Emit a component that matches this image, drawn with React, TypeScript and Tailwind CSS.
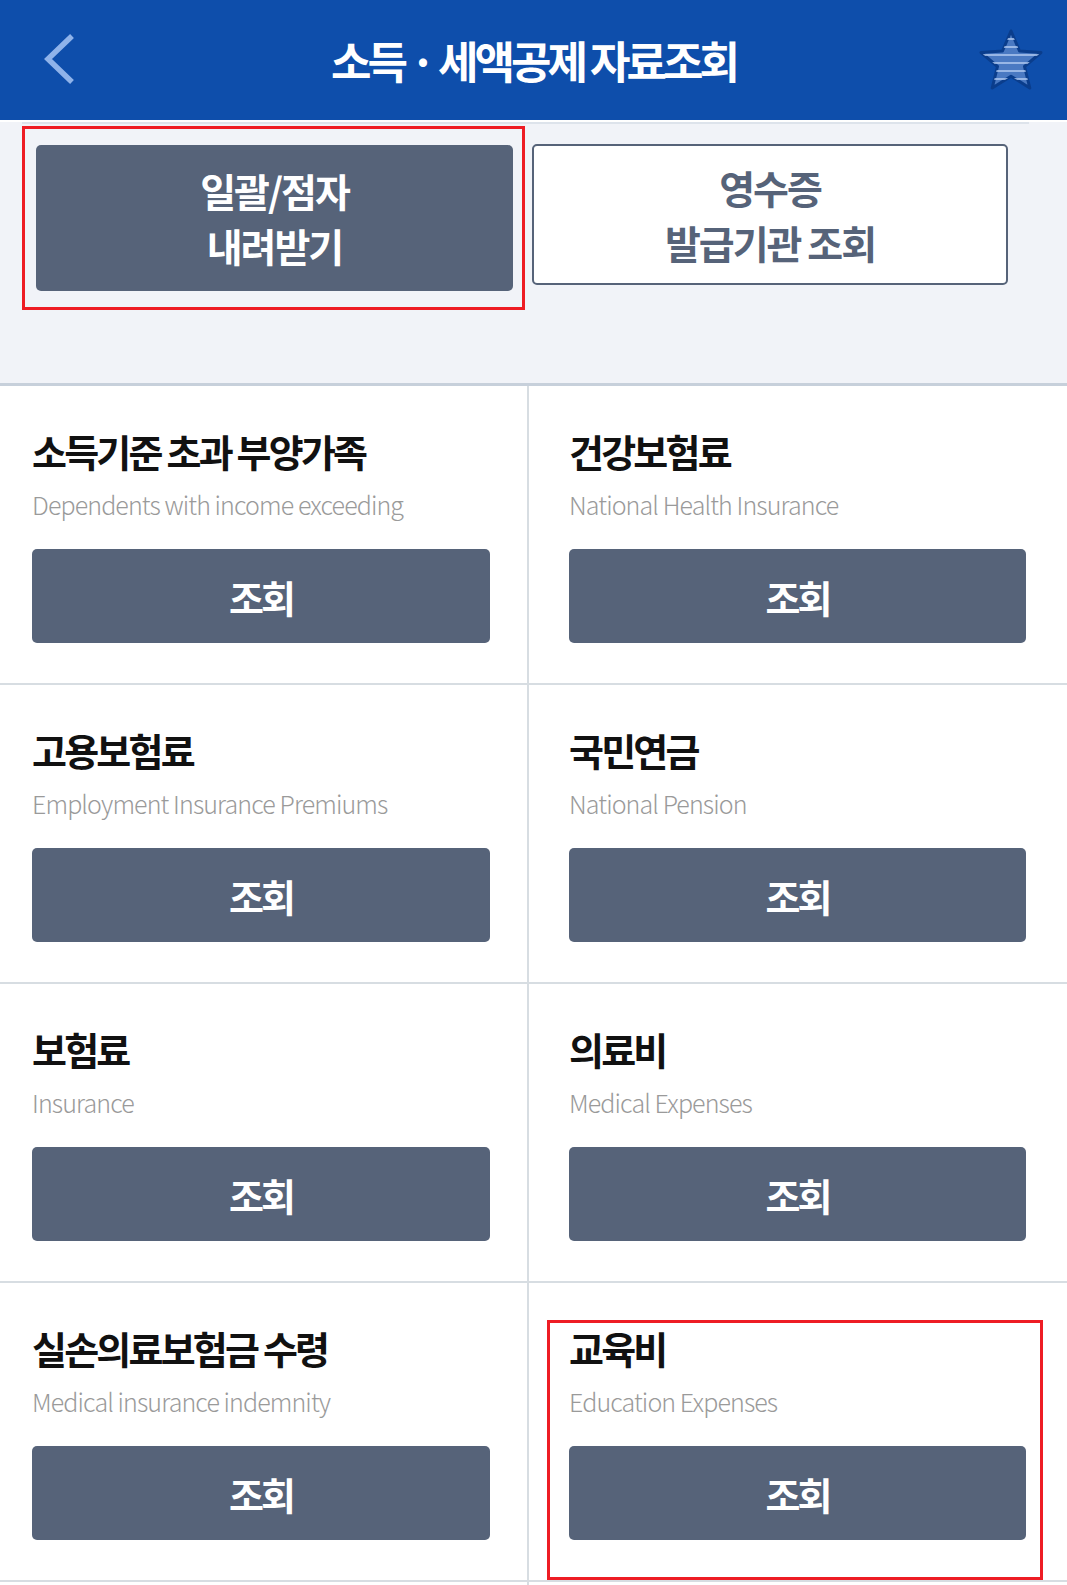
import React from "react";

const items: { ko: string; en: string }[] = [
  { ko: "소득기준 초과 부양가족", en: "Dependents with income exceeding" },
  { ko: "건강보험료", en: "National Health Insurance" },
  { ko: "고용보험료", en: "Employment Insurance Premiums" },
  { ko: "국민연금", en: "National Pension" },
  { ko: "보험료", en: "Insurance" },
  { ko: "의료비", en: "Medical Expenses" },
  { ko: "실손의료보험금 수령", en: "Medical insurance indemnity" },
  { ko: "교육비", en: "Education Expenses" },
];

const STAR =
  "M33 3 L41.5 23 L63 24.5 L46.5 38.5 L51.8 60 L33 48.2 L14.2 60 L19.5 38.5 L3 24.5 L24.5 23 Z";

function Star() {
  return (
    <svg width="66" height="63" viewBox="0 0 66 63">
      <defs>
        <clipPath id="starclip">
          <path d={STAR} />
        </clipPath>
      </defs>
      <path d={STAR} fill="#4a79c2" stroke="#0a3d8c" strokeWidth="3" strokeLinejoin="round" />
      <g clipPath="url(#starclip)" stroke="#b3cbf0" strokeWidth="1.6">
        <line x1="0" y1="11" x2="66" y2="11" />
        <line x1="0" y1="19" x2="66" y2="19" />
        <line x1="0" y1="27" x2="66" y2="27" />
        <line x1="0" y1="35" x2="66" y2="35" />
        <line x1="0" y1="43" x2="66" y2="43" />
        <line x1="0" y1="51" x2="66" y2="51" />
      </g>
    </svg>
  );
}

function Cell({ ko, en, right }: { ko: string; en: string; right?: boolean }) {
  return (
    <div
      className={
        "h-[299px] border-b-2 border-[#d7dde2] pt-[41px] " +
        (right ? "pl-[40px] pr-[41px]" : "pl-[32px] pr-[37px] border-r-2")
      }
    >
      <div className="h-[48px] leading-[48px] text-[38px] font-bold text-[#111111] tracking-[-2.8px] whitespace-nowrap">
        {ko}
      </div>
      <div className="mt-[13px] h-[32px] leading-[32px] text-[25px] font-light text-[#9a9a9a] tracking-[-0.9px] whitespace-nowrap">
        {en}
      </div>
      <button className="mt-[29px] w-full h-[94px] rounded-[5px] bg-[#566379] text-white text-[38px] font-bold tracking-[-3px]">
        조회
      </button>
    </div>
  );
}

export default function App() {
  return (
    <div className="relative w-[1067px] min-h-[1585px] bg-white overflow-hidden font-['Noto_Sans_CJK_KR',sans-serif]">
      <header className="relative h-[120px] bg-[#0e4eab] flex items-center justify-center">
        <svg className="absolute left-[40px] top-[34px]" width="36" height="50" viewBox="0 0 36 50">
          <path d="M30 4 L8 25 L30 46" fill="none" stroke="#8fb3ea" strokeWidth="5.5" strokeLinecap="square" />
        </svg>
        <h1 className="text-white text-[44px] font-bold tracking-[-4px] leading-none">
          소득 · 세액공제 자료조회
        </h1>
        <div className="absolute left-[978px] top-[28px]">
          <Star />
        </div>
      </header>

      <section className="h-[264px] bg-[#f1f3f8] border-b-[3px] border-[#c7d0db]">
        <div className="ml-[22px] mr-[38px] mt-[2px] h-[2px] bg-[#dde3eb]" />
        <div className="flex gap-[19px] pl-[36px] pt-[21px] items-start">
          <button className="w-[477px] h-[146px] rounded-[5px] bg-[#566379] text-white text-[39px] font-bold tracking-[-2px] leading-[55px]">
            일괄/점자
            <br />
            내려받기
          </button>
          <button className="w-[476px] h-[141px] -mt-[1px] rounded-[5px] bg-white border-2 border-[#566379] text-[#566379] text-[39px] font-bold tracking-[-2px] leading-[55px]">
            영수증
            <br />
            발급기관 조회
          </button>
        </div>
      </section>

      <div className="grid grid-cols-[529px_1fr]">
        {items.map((it, i) => (
          <Cell key={i} ko={it.ko} en={it.en} right={i % 2 === 1} />
        ))}
        <div className="h-[40px] border-r-2 border-[#d7dde2]" />
        <div className="h-[40px]" />
      </div>

      <div className="absolute left-[22px] top-[126px] w-[503px] h-[184px] border-[3px] border-[#ee1c24]" />
      <div className="absolute left-[547px] top-[1320px] w-[496px] h-[260px] border-[3px] border-[#ee1c24]" />
    </div>
  );
}
